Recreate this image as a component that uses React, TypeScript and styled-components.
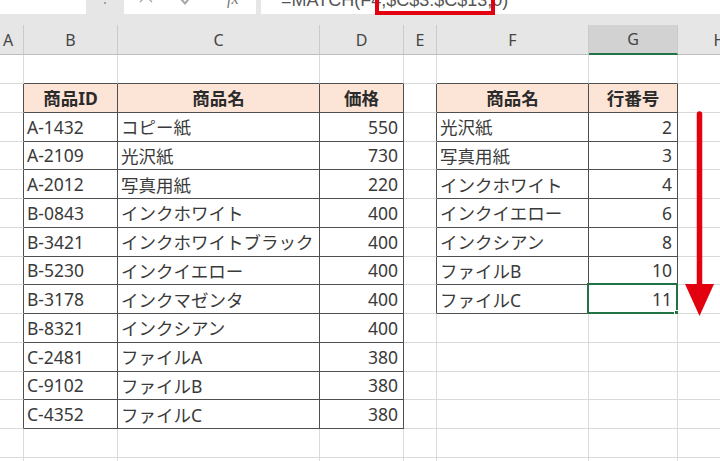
import React from "react";
import styled, { createGlobalStyle } from "styled-components";

const GlobalStyle = createGlobalStyle`
  html, body { margin: 0; padding: 0; background: #fff; }
  body { width: 720px; height: 461px; overflow: hidden; }
  #root { width: 720px; height: 461px; }
`;

const Page = styled.div`
  position: relative;
  width: 720px;
  height: 461px;
  overflow: hidden;
  background: #fff;
`;

const TopBar = styled.div`
  position: relative;
  display: flex;
  align-items: flex-start;
  height: 25px;
  background: #e6e6e6;
`;

const NameBox = styled.div`
  width: 86px;
  height: 14px;
  background: #fff;
`;

const Dots = styled.div`
  width: 38px;
  height: 14px;
  display: flex;
  justify-content: center;
  align-items: flex-start;
`;

const Dot = styled.span`
  display: block;
  width: 2px;
  height: 2px;
  margin-top: 2px;
  border-radius: 1px;
  background: #8c8c8c;
`;

const ToolBox = styled.div`
  width: 132px;
  height: 14px;
  background: #fff;
  display: flex;
  align-items: flex-start;
  overflow: hidden;
  padding-left: 15px;
  box-sizing: border-box;
`;

const ToolIcon = styled.svg<{ $ml: number; $mt: number }>`
  flex: none;
  margin-left: ${(p) => p.$ml}px;
  margin-top: ${(p) => p.$mt}px;
`;

const Fx = styled.span`
  margin-left: 32px;
  margin-top: -9px;
  font-family: "Liberation Serif", serif;
  font-style: italic;
  font-size: 16px;
  line-height: 16px;
  color: #777;
`;

const FormulaBox = styled.div`
  flex: 1;
  margin-left: 5px;
  height: 14px;
  background: #fff;
  overflow: hidden;
  padding-left: 20px;
`;

const FormulaText = styled.div`
  margin-top: -9px;
  font-family: "Liberation Sans", sans-serif;
  font-size: 18px;
  line-height: 18px;
  color: #555;
  white-space: nowrap;
`;

const Highlight = styled.div`
  position: absolute;
  left: 375px;
  top: -5px;
  width: 120px;
  height: 20px;
  box-sizing: border-box;
  border: 4px solid #e3000f;
`;

const Sheet = styled.div`
  display: grid;
  grid-template-columns: 24px 94px 202px 84px 33px 152px 89px 84px;
  grid-template-rows: 30px 29px repeat(12, 28.75px) 29px 29px;
`;

const ColHead = styled.div<{ $sel?: boolean; $pr?: number }>`
  box-sizing: border-box;
  display: flex;
  align-items: center;
  justify-content: center;
  padding-right: ${(p) => p.$pr ?? 0}px;
  background: ${(p) => (p.$sel ? "#d2d2d2" : "#e6e6e6")};
  border-right: 1px solid #cacaca;
  border-bottom: ${(p) => (p.$sel ? "2px solid #217346" : "1px solid #bdbdbd")};
  font-family: "Noto Sans", "Liberation Sans", sans-serif;
  font-size: 16px;
  color: #444;
`;

type Align = "left" | "center" | "right";

const Cell = styled.div<{ $rd?: boolean; $bd?: boolean; $head?: boolean; $align?: Align }>`
  position: relative;
  box-sizing: border-box;
  display: flex;
  align-items: center;
  justify-content: ${(p) =>
    p.$align === "right" ? "flex-end" : p.$align === "center" ? "center" : "flex-start"};
  padding: 0 ${(p) => (p.$align === "right" ? "5px" : "3px")} 0 3px;
  border-right: 1px solid ${(p) => (p.$rd ? "#4f4f4f" : "#dadada")};
  border-bottom: 1px solid ${(p) => (p.$bd ? "#4f4f4f" : "#dadada")};
  background: ${(p) => (p.$head ? "#fce4d6" : "#fff")};
  font-family: "Noto Sans", "Noto Sans CJK JP", sans-serif;
  font-size: 17.5px;
  font-weight: ${(p) => (p.$head ? 700 : 400)};
  color: ${(p) => (p.$head ? "#2b2b2b" : "#3a3a3a")};
  white-space: nowrap;
`;

const Selection = styled.div`
  position: absolute;
  left: -2px;
  top: -2px;
  right: -1px;
  bottom: -1px;
  border: 2px solid #217346;
  pointer-events: none;
`;

const Handle = styled.div`
  position: absolute;
  right: -5px;
  bottom: -5px;
  width: 5px;
  height: 5px;
  background: #217346;
  border: 1px solid #fff;
`;

const Arrow = styled.svg`
  position: absolute;
  left: 684px;
  top: 110px;
`;

const letters = ["A", "B", "C", "D", "E", "F", "G", "H"];

const table1: string[][] = [
  ["商品ID", "商品名", "価格"],
  ["A-1432", "コピー紙", "550"],
  ["A-2109", "光沢紙", "730"],
  ["A-2012", "写真用紙", "220"],
  ["B-0843", "インクホワイト", "400"],
  ["B-3421", "インクホワイトブラック", "400"],
  ["B-5230", "インクイエロー", "400"],
  ["B-3178", "インクマゼンタ", "400"],
  ["B-8321", "インクシアン", "400"],
  ["C-2481", "ファイルA", "380"],
  ["C-9102", "ファイルB", "380"],
  ["C-4352", "ファイルC", "380"],
];

const table2: string[][] = [
  ["商品名", "行番号"],
  ["光沢紙", "2"],
  ["写真用紙", "3"],
  ["インクホワイト", "4"],
  ["インクイエロー", "6"],
  ["インクシアン", "8"],
  ["ファイルB", "10"],
  ["ファイルC", "11"],
];

const ROWS = 15;
const COLS = 8;

const inTable = (r: number, c: number) =>
  (r >= 1 && r <= 12 && c >= 1 && c <= 3) || (r >= 1 && r <= 8 && c >= 5 && c <= 6);

const contentAt = (r: number, c: number): string => {
  if (r >= 1 && r <= 12 && c >= 1 && c <= 3) return table1[r - 1][c - 1];
  if (r >= 1 && r <= 8 && c >= 5 && c <= 6) return table2[r - 1][c - 5];
  return "";
};

const alignAt = (r: number, c: number): Align => {
  if (r === 1) return "center";
  if (c === 3 || c === 6) return "right";
  return "left";
};

export default function App() {
  const cells: React.ReactNode[] = [];
  for (let r = 0; r < ROWS; r++) {
    for (let c = 0; c < COLS; c++) {
      const here = inTable(r, c);
      const rd = here || inTable(r, c + 1);
      const bd = here || inTable(r + 1, c);
      const selected = r === 8 && c === 6;
      cells.push(
        <Cell
          key={`${r}-${c}`}
          $rd={rd}
          $bd={bd}
          $head={here && r === 1}
          $align={alignAt(r, c)}
        >
          {contentAt(r, c)}
          {selected && (
            <Selection>
              <Handle />
            </Selection>
          )}
        </Cell>
      );
    }
  }

  return (
    <Page>
      <GlobalStyle />
      <TopBar>
        <NameBox />
        <Dots>
          <Dot />
        </Dots>
        <ToolBox>
          <ToolIcon $ml={0} $mt={-11} width="14" height="14" viewBox="0 0 14 14">
            <path d="M1 1 L13 13 M13 1 L1 13" stroke="#a6a6a6" strokeWidth="1.4" fill="none" />
          </ToolIcon>
          <ToolIcon $ml={26} $mt={-9} width="16" height="14" viewBox="0 0 16 14">
            <path d="M1 7 L6 12.5 L15 1.5" stroke="#a6a6a6" strokeWidth="2" fill="none" />
          </ToolIcon>
          <Fx>fx</Fx>
        </ToolBox>
        <FormulaBox>
          <FormulaText>=MATCH(F4,$C$3:$C$13,0)</FormulaText>
        </FormulaBox>
        <Highlight />
      </TopBar>
      <Sheet>
        {letters.map((l, i) => (
          <ColHead key={l} $sel={l === "G"} $pr={i === 0 ? 7 : 0}>
            {l}
          </ColHead>
        ))}
        {cells}
      </Sheet>
      <Arrow width="32" height="208" viewBox="684 110 32 208">
        <line x1="699.5" y1="114" x2="699.5" y2="290" stroke="#e3000f" strokeWidth="5.5" strokeLinecap="round" />
        <polygon points="685,284 714,284 699.5,316" fill="#e3000f" />
      </Arrow>
    </Page>
  );
}
